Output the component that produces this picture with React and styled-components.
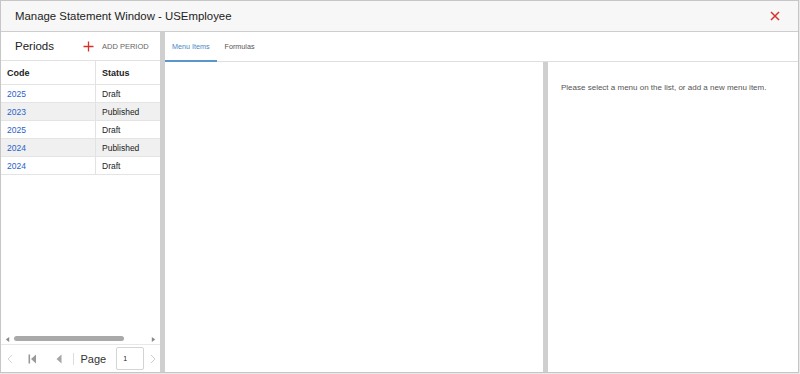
import React from 'react';
import styled, { createGlobalStyle } from 'styled-components';

const GlobalStyle = createGlobalStyle`
  html, body {
    margin: 0;
    padding: 0;
    background: #e9e9e9;
  }
  * {
    box-sizing: border-box;
  }
`;

const Window = styled.div`
  width: 799px;
  height: 373px;
  background: #fff;
  border: 1px solid #c6c6c6;
  display: flex;
  flex-direction: column;
  font-family: 'Liberation Sans', Arial, sans-serif;
  overflow: hidden;
`;

const TitleBar = styled.div`
  height: 31px;
  flex: none;
  background: #f7f7f7;
  border-bottom: 1px solid #cdcdcd;
  display: flex;
  align-items: center;
  justify-content: space-between;
  padding: 0 18px 0 14px;
`;

const Title = styled.h1`
  margin: 0;
  font-size: 11.4px;
  font-weight: normal;
  color: #222;
`;

const CloseButton = styled.button`
  border: none;
  background: none;
  padding: 0;
  display: flex;
  cursor: pointer;
`;

const Body = styled.div`
  flex: 1;
  display: flex;
  min-height: 0;
`;

const Sidebar = styled.div`
  width: 159px;
  flex: none;
  display: flex;
  flex-direction: column;
`;

const Splitter = styled.div`
  width: 5px;
  flex: none;
  background: #cfcfcf;
`;

const SidebarHeader = styled.div`
  height: 29px;
  flex: none;
  display: flex;
  align-items: center;
  padding-left: 14px;
  border-bottom: 1px solid #e2e2e2;
`;

const SidebarTitle = styled.span`
  font-size: 11.5px;
  color: #222;
  width: 68px;
`;

const AddButton = styled.button`
  border: none;
  background: none;
  padding: 0;
  display: flex;
  align-items: center;
  gap: 8px;
  font-family: inherit;
  font-size: 7.5px;
  color: #666;
  text-transform: uppercase;
  cursor: pointer;
`;

const Grid = styled.div`
  flex: 1;
  display: flex;
  flex-direction: column;
`;

const Row = styled.div`
  display: grid;
  grid-template-columns: 94px 1fr;
  height: ${p => (p.$head ? '24px' : '18px')};
  background: ${p => (p.$alt ? '#f0f0f0' : '#fff')};
  border-bottom: 1px solid #e4e4e4;
`;

const Cell = styled.div`
  display: flex;
  align-items: center;
  padding-left: 6px;
  font-size: ${p => (p.$head ? '9px' : '8.5px')};
  font-weight: ${p => (p.$head ? 'bold' : 'normal')};
  color: ${p => (p.$link ? '#2a62c9' : '#222')};
  border-left: ${p => (p.$second ? '1px solid #e2e2e2' : 'none')};
`;

const Spacer = styled.div`
  flex: 1;
`;

const HScroll = styled.div`
  height: 10px;
  display: flex;
  align-items: center;
  padding: 0 4px;
  gap: 4px;
`;

const ScrollTrack = styled.div`
  flex: 1;
  height: 6px;
  display: flex;
`;

const ScrollThumb = styled.div`
  width: 110px;
  height: 5px;
  border-radius: 3px;
  background: #a9a9a9;
`;

const Pager = styled.div`
  height: 28px;
  flex: none;
  border-top: 1px solid #e8e8e8;
  display: flex;
  align-items: center;
  padding-left: 1px;
`;

const PagerButton = styled.span`
  display: flex;
  align-items: center;
  justify-content: center;
  width: ${p => p.$w || 26}px;
`;

const PagerSep = styled.span`
  width: 1px;
  height: 12px;
  background: #dcdcdc;
  margin: 0 7px 0 3px;
`;

const PageLabel = styled.span`
  font-size: 11px;
  color: #333;
  margin-right: 10px;
`;

const PageInput = styled.div`
  width: 29px;
  height: 23px;
  border: 1px solid #d4d4d4;
  border-radius: 2px;
  font-size: 7px;
  color: #222;
  display: flex;
  align-items: center;
  padding-left: 6px;
  margin-right: 3px;
`;

const Main = styled.div`
  flex: 1;
  display: flex;
  flex-direction: column;
  min-width: 0;
`;

const Tabs = styled.div`
  height: 30px;
  flex: none;
  display: flex;
  border-bottom: 1px solid #dedede;
`;

const Tab = styled.div`
  display: flex;
  align-items: center;
  padding: 0 7px;
  margin-right: 1px;
  font-size: 7.2px;
  color: ${p => (p.$active ? '#4a86c5' : '#555')};
  border-bottom: 2px solid ${p => (p.$active ? '#5b95cc' : 'transparent')};
  margin-bottom: -1px;
`;

const Panes = styled.div`
  flex: 1;
  display: flex;
`;

const ListPane = styled.div`
  width: 378px;
  flex: none;
`;

const DetailPane = styled.div`
  flex: 1;
  padding: 21px 13px;
  font-size: 8px;
  color: #555;
`;

const periods = [
  { code: '2025', status: 'Draft' },
  { code: '2023', status: 'Published' },
  { code: '2025', status: 'Draft' },
  { code: '2024', status: 'Published' },
  { code: '2024', status: 'Draft' },
];

const Tri = ({ dir, color = '#777', size = 6 }) => (
  <svg width={size} height={size} viewBox="0 0 6 6">
    {dir === 'left' ? <path d="M5 0 L1 3 L5 6 Z" fill={color} /> : <path d="M1 0 L5 3 L1 6 Z" fill={color} />}
  </svg>
);

export default function App() {
  return (
    <>
      <GlobalStyle />
      <Window>
        <TitleBar>
          <Title>Manage Statement Window - USEmployee</Title>
          <CloseButton aria-label="Close">
            <svg width="10" height="10" viewBox="0 0 10 10">
              <path d="M1 1 L9 9 M9 1 L1 9" stroke="#d9302a" strokeWidth="1.5" />
            </svg>
          </CloseButton>
        </TitleBar>
        <Body>
          <Sidebar>
            <SidebarHeader>
              <SidebarTitle>Periods</SidebarTitle>
              <AddButton>
                <svg width="11" height="11" viewBox="0 0 11 11">
                  <path d="M5.5 0.5 V10.5 M0.5 5.5 H10.5" stroke="#d9302a" strokeWidth="1.3" />
                </svg>
                Add Period
              </AddButton>
            </SidebarHeader>
            <Grid>
              <Row $head>
                <Cell $head>Code</Cell>
                <Cell $head $second>Status</Cell>
              </Row>
              {periods.map((p, i) => (
                <Row key={i} $alt={i % 2 === 1}>
                  <Cell $link>{p.code}</Cell>
                  <Cell $second>{p.status}</Cell>
                </Row>
              ))}
              <Spacer />
              <HScroll>
                <Tri dir="left" color="#888" size={5} />
                <ScrollTrack>
                  <ScrollThumb />
                </ScrollTrack>
                <Tri dir="right" color="#888" size={5} />
              </HScroll>
            </Grid>
            <Pager>
              <PagerButton $w={16}>
                <svg width="6" height="10" viewBox="0 0 6 10">
                  <path d="M5 1 L1 5 L5 9" stroke="#d6d6d6" strokeWidth="1" fill="none" />
                </svg>
              </PagerButton>
              <PagerButton $w={34}>
                <svg width="9" height="10" viewBox="0 0 9 10">
                  <rect x="0.5" y="0.5" width="1.6" height="9" fill="#9a9a9a" />
                  <path d="M8 0.5 L3 5 L8 9.5 Z" fill="#9a9a9a" />
                </svg>
              </PagerButton>
              <PagerButton $w={22}>
                <svg width="6" height="10" viewBox="0 0 6 10">
                  <path d="M5.5 0.5 L0.5 5 L5.5 9.5 Z" fill="#a5a5a5" />
                </svg>
              </PagerButton>
              <PagerSep />
              <PageLabel>Page</PageLabel>
              <PageInput>1</PageInput>
              <PagerButton $w={14}>
                <svg width="6" height="10" viewBox="0 0 6 10">
                  <path d="M1 1 L5 5 L1 9" stroke="#cfcfcf" strokeWidth="1" fill="none" />
                </svg>
              </PagerButton>
            </Pager>
          </Sidebar>
          <Splitter />
          <Main>
            <Tabs>
              <Tab $active>Menu Items</Tab>
              <Tab>Formulas</Tab>
            </Tabs>
            <Panes>
              <ListPane />
              <Splitter />
              <DetailPane>Please select a menu on the list, or add a new menu item.</DetailPane>
            </Panes>
          </Main>
        </Body>
      </Window>
    </>
  );
}
